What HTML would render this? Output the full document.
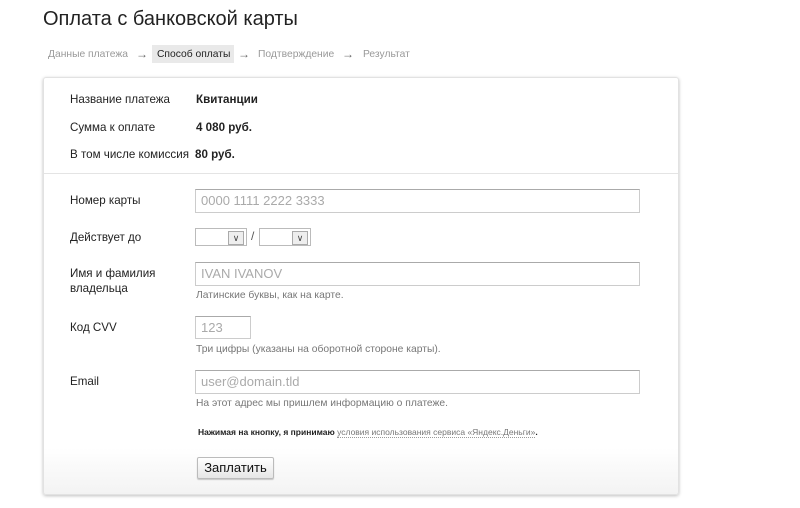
<!DOCTYPE html>
<html><head><meta charset="utf-8"><style>
body{margin:0;width:800px;height:508px;background:#fff;font-family:"Liberation Sans",sans-serif;color:#222;position:relative;overflow:hidden}
.a{position:absolute;white-space:nowrap}
.t{left:43px;top:8px;font-size:20px;color:#222}
.bc{top:49px;font-size:10.3px;color:#999}
.card{position:absolute;left:43px;top:77px;width:634px;height:416px;border:1px solid #e2e2e2;border-radius:3px;box-shadow:0 1px 3px rgba(0,0,0,.25);background:linear-gradient(#fff 370px,#f3f3f3 416px)}
.lbl{font-size:11.6px;color:#222;left:70px}
.b{font-weight:bold;font-size:11.6px;left:196px}
.in{position:absolute;border:1px solid #ccc;border-top-color:#aaa;background:#fff;box-sizing:border-box;font-size:13px;color:#aaa;padding:3px 5px}
.h{font-size:10.3px;color:#777;left:196px}
.sel{position:absolute;border:1px solid #bbb;box-sizing:border-box;background:#fff;height:18px}
.sel i{position:absolute;right:2px;top:2px;width:14px;height:12px;border:1px solid #aaa;background:#eee;font-style:normal;font-size:9px;text-align:center;line-height:12px;color:#444}
.ar{top:47px;font-size:12px;color:#666}
</style></head><body>
<div class="a t">Оплата с банковской карты</div>
<div class="a bc" style="left:48px">Данные платежа</div>
<div class="a ar" style="left:136px">→</div>
<div class="a" style="left:152px;top:45px;width:82px;height:18px;background:#e9e9e9"></div>
<div class="a bc" style="left:157px;color:#222">Способ оплаты</div>
<div class="a ar" style="left:238px">→</div>
<div class="a bc" style="left:258px">Подтверждение</div>
<div class="a ar" style="left:342px">→</div>
<div class="a bc" style="left:363px">Результат</div>
<div class="card"></div>
<div class="a" style="left:44px;top:173px;width:634px;height:1px;background:#e4e4e4"></div>
<div class="a lbl" style="top:93px">Название платежа</div><div class="a b" style="top:93px">Квитанции</div>
<div class="a lbl" style="top:121px">Сумма к оплате</div><div class="a b" style="top:121px">4 080 руб.</div>
<div class="a lbl" style="top:148px">В том числе комиссия</div><div class="a b" style="top:148px;left:195px">80 руб.</div>
<div class="a lbl" style="top:194px">Номер карты</div>
<div class="in" style="left:195px;top:189px;width:445px;height:24px">0000 1111 2222 3333</div>
<div class="a lbl" style="top:231px">Действует до</div>
<div class="sel" style="left:195px;top:228px;width:52px"><i>∨</i></div>
<div class="a" style="left:251px;top:229px;font-size:12px;color:#555">/</div>
<div class="sel" style="left:259px;top:228px;width:52px"><i>∨</i></div>
<div class="a lbl" style="top:266px;line-height:15px">Имя и фамилия<br>владельца</div>
<div class="in" style="left:195px;top:262px;width:445px;height:24px">IVAN IVANOV</div>
<div class="a h" style="top:290px">Латинские буквы, как на карте.</div>
<div class="a lbl" style="top:321px">Код CVV</div>
<div class="in" style="left:195px;top:316px;width:56px;height:23px">123</div>
<div class="a h" style="top:344px">Три цифры (указаны на оборотной стороне карты).</div>
<div class="a lbl" style="top:375px">Email</div>
<div class="in" style="left:195px;top:370px;width:445px;height:24px">user@domain.tld</div>
<div class="a h" style="top:398px">На этот адрес мы пришлем информацию о платеже.</div>
<div class="a" style="left:198px;top:427px;font-size:8.5px;font-weight:bold;color:#222">Нажимая на кнопку, я принимаю <span style="font-weight:normal;color:#777;border-bottom:1px dotted #999">условия использования сервиса «Яндекс.Деньги»</span>.</div>
<div class="a" style="left:197px;top:457px;width:77px;height:22px;box-sizing:border-box;border:1px solid #bbb;border-radius:2px;background:linear-gradient(#fff,#e6e6e6);box-shadow:0 1px 1px rgba(0,0,0,.2);font-size:13px;text-align:center;line-height:20px;color:#111">Заплатить</div>
</body></html>
